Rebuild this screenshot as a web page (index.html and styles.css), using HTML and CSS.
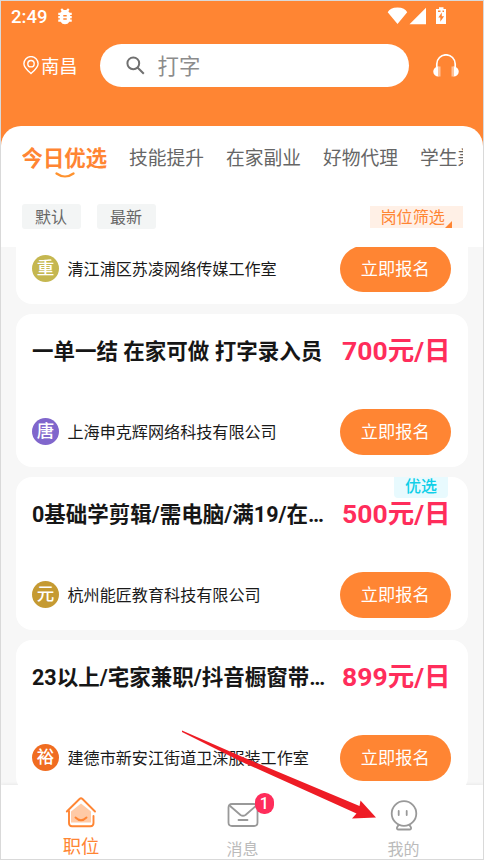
FILE: index.html
```html
<!DOCTYPE html>
<html lang="zh-CN">
<head>
<meta charset="utf-8">
<title>职位</title>
<link rel="stylesheet" href="styles.css">
</head>
<body>
<div class="phone">
  <header class="header">
    <div class="status">
      <span class="time">2:49</span>
      <svg class="bug" width="18" height="18" viewBox="0 0 24 24"><path fill="#fff" d="M21 7.500h-2.800c-.4-.8-1-1.500-1.800-2L18 3.700 16 1.700 13.600 4.100a7 7 0 0 0-3.200 0L8 1.700 6 3.700l1.600 1.800c-.8.500-1.400 1.200-1.800 2H3v3h2.100V12H3v3h2.100v1.500H3v3h3.200a6.600 6.600 0 0 0 11.600 0H21v-3h-2.100V15H21v-3h-2.100v-1.500H21zM14.300 17H9.700v-2h4.600zm0-4.500H9.700v-2h4.600z"/></svg>
      <svg class="signals" width="62" height="18" viewBox="0 0 62 18"><path fill="#fff" d="M.7 5.200Q3 .8 10.500.6 18 .8 20.200 5.200L10.500 17zM22.500 17.200H39V.8zM49 2h3V.3h4.500V2H59v15H49z"/><path fill="#ff8533" d="M51 3.500h2.500v1.500H51zM55.500 3.500H57v1.500h-1.500zM54.800 5.500 51.300 10.500h2v4.300l3.800-5.600h-2.300z"/></svg>
    </div>
    <div class="search-row">
      <div class="city">
        <svg width="16" height="19" viewBox="0 0 16 19" fill="none" stroke="#fff" stroke-width="1.400"><path d="M8 17.500C5 14.800.9 11.500.9 7.700a7.100 7.100 0 0 1 14.200 0C15.100 11.500 11 14.800 8 17.500z"/><circle cx="8" cy="7.700" r="3.200"/></svg>
        <span>南昌</span>
      </div>
      <div class="search">
        <svg width="19" height="19" viewBox="0 0 19 19" fill="none" stroke="#707070" stroke-width="2"><circle cx="7.300" cy="7.300" r="5.900"/><path d="m11.500 11.500 6.300 6.300"/></svg>
        <span>打字</span>
      </div>
      <svg class="headset" width="26" height="23" viewBox="0 0 26 23"><path d="M3.800 13V10a9.200 9.200 0 0 1 18.400 0v3" fill="none" stroke="#fff" stroke-width="1.700"/><path fill="#fff" d="M5.500 12.500v10A5 5 0 0 1 5 12.500zM20.500 12.500v10a5 5 0 0 0 .5-10z"/><path fill="#ffc299" d="M5 12.500H7.500v10H5zM18.500 12.500H21v10h-2.500z"/></svg>
    </div>
  </header>

  <section class="panel">
    <nav class="tabs">
      <div class="tab active">今日优选<svg class="smile" width="20" height="7" viewBox="0 0 20 7"><path d="M1.500 1.500Q10 7.500 18.500 1.500" fill="none" stroke="#ff922e" stroke-width="2.200" stroke-linecap="round"/></svg></div>
      <div class="tab">技能提升</div>
      <div class="tab">在家副业</div>
      <div class="tab">好物代理</div>
      <div class="tab">学生兼职</div>
    </nav>
    <div class="filters">
      <span class="chip">默认</span>
      <span class="chip">最新</span>
      <span class="chip-filter">岗位筛选<i class="corner"></i></span>
    </div>
  </section>

  <main class="list">
    <article class="card">
      <div class="top"></div>
      <div class="bottom"><span class="avatar olive">重</span><span class="company">清江浦区苏凌网络传媒工作室</span><button class="apply">立即报名</button></div>
    </article>
    <article class="card">
      <div class="top"><h2 class="title">一单一结 在家可做 打字录入员</h2><span class="price">700元/日</span></div>
      <div class="bottom"><span class="avatar purple">唐</span><span class="company">上海申克辉网络科技有限公司</span><button class="apply">立即报名</button></div>
    </article>
    <article class="card">
      <span class="tag">优选</span>
      <div class="top"><h2 class="title">0基础学剪辑/需电脑/满19/在…</h2><span class="price">500元/日</span></div>
      <div class="bottom"><span class="avatar gold">元</span><span class="company">杭州能匠教育科技有限公司</span><button class="apply">立即报名</button></div>
    </article>
    <article class="card">
      <div class="top"><h2 class="title">23以上/宅家兼职/抖音橱窗带…</h2><span class="price">899元/日</span></div>
      <div class="bottom"><span class="avatar orange">裕</span><span class="company">建德市新安江街道卫涞服装工作室</span><button class="apply">立即报名</button></div>
    </article>
  </main>

  <footer class="nav">
    <div class="nav-item current">
      <svg width="32" height="32" viewBox="0 0 32 32" fill="none" stroke="#ff8533" stroke-width="1.900" stroke-linecap="round" stroke-linejoin="round"><path d="M16 7.500 26 15.500V26.500H6V15.500z" fill="#ffcaa6" stroke="none"/><path d="M1.800 15.500 14.500 3Q16 1.700 17.500 3L30 15.500"/><path d="M4 15v12q0 3.200 3 3.200h18.500q3 0 3-3.200V20"/><path d="M10.500 21.500Q16 27 21.500 21.500"/></svg>
      <span>职位</span>
    </div>
    <div class="nav-item">
      <svg width="32" height="26" viewBox="0 0 32 26" fill="none" stroke="#999" stroke-width="1.800" stroke-linecap="round" stroke-linejoin="round"><path d="M5 2h22q3.500 0 3.500 3.500v15q0 3.500-3.500 3.500H5q-3.500 0-3.500-3.500v-15Q1.500 2 5 2z"/><path d="M2.500 3.500 13.500 13q2.500 1.500 5 0L29.500 3.500M11.500 18h9"/></svg>
      <span class="badge">1</span>
      <span>消息</span>
    </div>
    <div class="nav-item">
      <svg width="28" height="31" viewBox="0 0 28 31" fill="none" stroke="#999" stroke-width="1.800" stroke-linecap="round" stroke-linejoin="round"><circle cx="14" cy="13.500" r="12.300"/><path d="M8.700 11v4M16.700 11v4"/><path d="M8.500 25 7 27.500q-.5 2 1.500 2h11q2 0 1.500-2L19.500 25"/></svg>
      <span>我的</span>
    </div>
  </footer>

  <svg class="pointer" width="196" height="91" viewBox="0 0 196 91"><path fill="#ee1c25" d="M1 .5 60.500 26.500 178.500 76 179.500 70.500 195 87.500 171 88.500 175.500 83.500 60 31.500 1 2z"/></svg>
</div>
</body>
</html>
```
FILE: styles.css
```css
* { box-sizing: border-box; }
body {
  margin: 0;
  font-family: Roboto, "Noto Sans CJK SC", sans-serif;
}
svg { display: block; flex: none; }
.phone {
  position: relative;
  display: flex;
  flex-direction: column;
  width: 484px;
  height: 860px;
  border: 1px solid #d9d9d9;
  background: #f7f7f7;
  overflow: hidden;
}
.header {
  flex: none;
  height: 145px;
  background: #ff8533;
  color: #fff;
}
.status {
  display: flex;
  align-items: center;
  height: 30px;
  padding: 0 34px 0 10px;
}
.time { width: 45px; padding-top: 1px; font-size: 18.500px; font-weight: 500; }
.signals { margin-left: auto; }
.search-row {
  display: flex;
  align-items: center;
  height: 43px;
  margin-top: 13px;
  padding: 0 24px 0 22px;
}
.city {
  display: flex;
  align-items: center;
  width: 76.500px;
  gap: 2px;
  font-size: 18.300px;
}
.city span { padding-bottom: 2px; }
.search {
  display: flex;
  align-items: center;
  gap: 12.500px;
  width: 309.500px;
  height: 43px;
  padding-left: 26.500px;
  border-radius: 22px;
  background: #fff;
  color: #8c8c8c;
  font-size: 21.400px;
}
.search span { padding-bottom: 2px; }
.headset { margin-left: auto; }

.panel {
  flex: none;
  height: 121px;
  margin-top: -20px;
  padding: 0 20.500px;
  border-radius: 20px 20px 0 0;
  background: #fff;
}
.tabs {
  display: flex;
  gap: 22px;
  height: 64px;
  overflow: hidden;
  line-height: 66px;
  white-space: nowrap;
}
.tab { flex: none; color: #666; font-size: 18.750px; }
.tab.active {
  position: relative;
  color: #ff8533;
  font-size: 21.400px;
  font-weight: 700;
}
.smile { position: absolute; left: 33px; top: 46px; }
.filters {
  display: flex;
  align-items: center;
  gap: 16px;
  height: 25px;
  margin-top: 14px;
}
.chip {
  width: 59px;
  height: 25px;
  border-radius: 3px;
  background: #f3f5f5;
  color: #666;
  font-size: 16px;
  line-height: 27px;
  text-align: center;
}
.chip-filter {
  position: relative;
  width: 92.500px;
  height: 22px;
  margin-left: auto;
  padding-left: 10.500px;
  background: #fff0e6;
  color: #ff8533;
  font-size: 16.100px;
  line-height: 24px;
}
.corner {
  position: absolute;
  right: 10.500px;
  bottom: 0;
  border-bottom: 7px solid #ff8533;
  border-left: 7px solid transparent;
}

.list {
  flex: 1;
  min-height: 0;
  overflow: hidden;
  padding: 0 15px;
}
.card {
  position: relative;
  height: 153px;
  margin-bottom: 10px;
  padding: 14px 17.500px 12px 16px;
  border-radius: 16px;
  background: #fff;
}
.card:first-child { margin-top: -96px; }
.top {
  display: flex;
  align-items: center;
  justify-content: space-between;
  height: 45px;
}
.title {
  margin: 0;
  padding-bottom: 2px;
  color: #161616;
  font-size: 21.500px;
  font-weight: 700;
  white-space: nowrap;
}
.price { padding-bottom: 4px; color: #ff2d5b; font-size: 26.500px; font-weight: 700; white-space: nowrap; }
.bottom {
  display: flex;
  align-items: center;
  height: 46px;
  margin-top: 36px;
}
.avatar {
  width: 27px;
  height: 27px;
  margin: 0 8.500px 1px 0;
  border-radius: 50%;
  color: #fff;
  font-size: 17.500px;
  font-weight: 500;
  line-height: 26px;
  text-align: center;
}
.olive { background: #c5b750; }
.purple { background: #8066cc; }
.gold { background: #c59a32; }
.orange { background: #f06c20; }
.company { padding-bottom: 2px; color: #1a1a1a; font-size: 16.100px; white-space: nowrap; }
.apply {
  width: 110.500px;
  height: 46px;
  margin-left: auto;
  padding: 0 0 3px;
  border: 0;
  border-radius: 23px;
  background: #ff8533;
  color: #fff;
  font-family: inherit;
  font-size: 17.200px;
}
.tag {
  position: absolute;
  top: 0;
  right: 20px;
  width: 54px;
  height: 21px;
  border-radius: 0 0 4px 4px;
  background: #e8fafe;
  color: #10cfe8;
  font-size: 16px;
  font-weight: 500;
  line-height: 20px;
  text-align: center;
}

.nav {
  display: grid;
  grid-template-columns: repeat(3, 161px);
  flex: none;
  height: 74px;
  background: #fff;
  box-shadow: 0 -1px 3px rgba(0, 0, 0, .06);
}
.nav-item {
  position: relative;
  display: flex;
  flex-direction: column;
  align-items: center;
  justify-content: flex-end;
  gap: 8px;
  color: #bbb;
  font-size: 16px;
  line-height: 22px;
}
.nav-item span:last-child { margin-bottom: -2px; }
.nav-item.current { padding: 0 1px 3px 0; color: #ff8533; font-size: 18.300px; }
.nav-item:nth-child(2) { gap: 11px; }
.badge {
  position: absolute;
  left: 92.500px;
  top: 8px;
  width: 19.500px;
  height: 21px;
  border-radius: 9px;
  background: #ff2d5b;
  color: #fff;
  font-weight: 500;
  line-height: 21px;
  text-align: center;
}
.pointer { position: absolute; left: 180px; top: 729px; }
```
